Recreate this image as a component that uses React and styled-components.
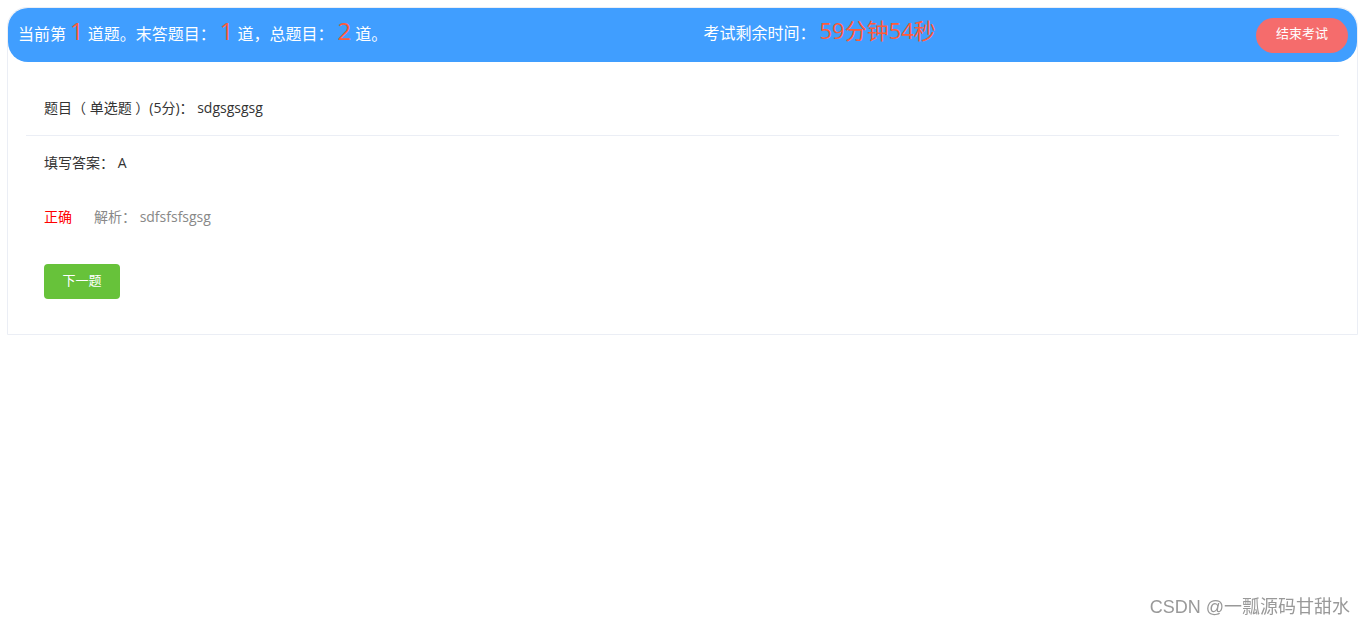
import React from "react";
import styled, { createGlobalStyle } from "styled-components";

const GlobalStyle = createGlobalStyle`
  html, body {
    margin: 0;
    padding: 0;
    background: #fff;
    font-family: "Open Sans", "Noto Sans CJK SC", sans-serif;
  }
`;

const Page = styled.div`
  padding: 7px 8px 0 7px;
`;

const Card = styled.div`
  border: 1px solid #ebeef5;
  border-top-left-radius: 20px;
  border-top-right-radius: 20px;
`;

const Header = styled.div`
  height: 54px;
  background: #409eff;
  border-radius: 20px;
  display: flex;
  align-items: center;
  justify-content: space-between;
  padding: 0 9px 0 10px;
  color: #fff;
  font-size: 16px;
`;

const Info = styled.div`
  display: flex;
  align-items: baseline;
  white-space: nowrap;
  line-height: 24px;
  margin-bottom: 6px;
`;

const Num = styled.span`
  color: #ff5b3a;
  font-size: ${(p) => p.size || 24}px;
  line-height: 1;
  margin: 0 ${(p) => (p.gap ? 4 : 0)}px;
`;

const EndButton = styled.button`
  width: 92px;
  height: 35px;
  padding: 0 0 5px;
  border: none;
  border-radius: 18px;
  background: #f56c6c;
  color: #fff;
  font-family: inherit;
  font-size: 13px;
  cursor: pointer;
`;

const Content = styled.div`
  padding: 19px 18px 18px;
`;

const Row = styled.div`
  padding: 17px 18px;
  line-height: 20px;
  font-size: 14px;
  color: #333;
  border-bottom: ${(p) => (p.divided ? "1px solid #ebeef5" : "none")};
  display: flex;
  gap: 22px;
`;

const ButtonRow = styled.div`
  padding: 20px 18px 17px;
`;

const Status = styled.span`
  color: #ff0000;
`;

const Analysis = styled.span`
  color: #888;
`;

const NextButton = styled.button`
  width: 76px;
  height: 35px;
  padding: 0 0 4px;
  border: none;
  border-radius: 4px;
  background: #67c23a;
  color: #fff;
  font-family: inherit;
  font-size: 13px;
  cursor: pointer;
`;

const Watermark = styled.div`
  position: fixed;
  right: 16px;
  bottom: 6px;
  font-size: 18px;
  color: #999;
  font-family: "Liberation Sans", "Noto Sans CJK SC", sans-serif;
  text-shadow: 0 0 1px rgba(255, 255, 255, 0.8);
`;

export default function App() {
  return (
    <Page>
      <GlobalStyle />
      <Card>
        <Header>
          <Info>
            当前第<Num gap="1">1</Num>道题。末答题目：<Num gap="1">1</Num>道，总题目：
            <Num gap="1">2</Num>道。
          </Info>
          <Info>
            考试剩余时间：<Num size={22} gap="1">59分钟54秒</Num>
          </Info>
          <EndButton>结束考试</EndButton>
        </Header>
        <Content>
          <Row divided>题目（ 单选题 ）(5分)： sdgsgsgsg</Row>
          <Row>填写答案： A</Row>
          <Row>
            <Status>正确</Status>
            <Analysis>解析： sdfsfsfsgsg</Analysis>
          </Row>
          <ButtonRow>
            <NextButton>下一题</NextButton>
          </ButtonRow>
        </Content>
      </Card>
      <Watermark>CSDN @一瓢源码甘甜水</Watermark>
    </Page>
  );
}
